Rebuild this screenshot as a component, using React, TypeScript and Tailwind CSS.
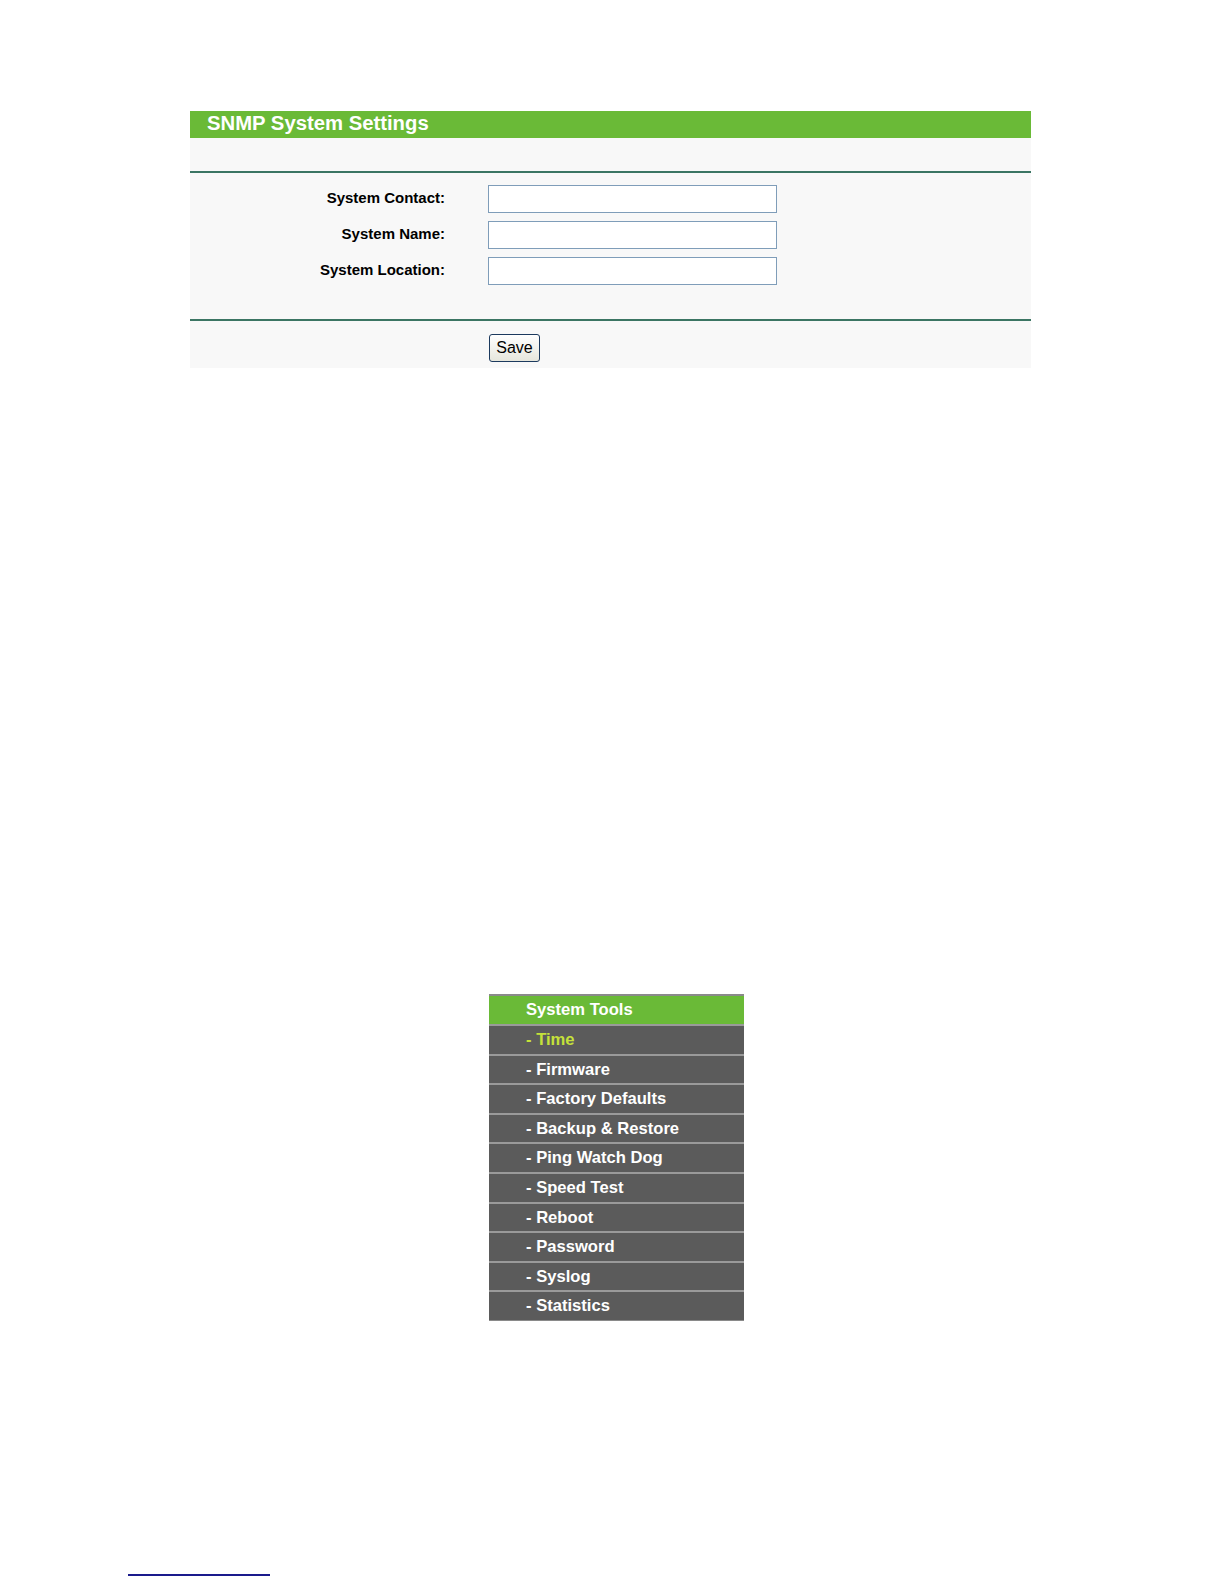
import React from 'react';

const fields = ['System Contact:', 'System Name:', 'System Location:'];

const menuItems = [
  'Time',
  'Firmware',
  'Factory Defaults',
  'Backup & Restore',
  'Ping Watch Dog',
  'Speed Test',
  'Reboot',
  'Password',
  'Syslog',
  'Statistics',
];

const SettingsPanel: React.FC = () => (
  <div className="ml-[190px] w-[841px] bg-[#f8f8f8]">
    <div className="h-[27px] bg-[#6aba37] pl-[17px] text-[20.3px] font-bold leading-[25px] text-white">
      SNMP System Settings
    </div>
    <div className="h-[33px]" />
    <div className="h-[2px] bg-[#3b7563]" />
    <div className="flex flex-col gap-[8px] pt-[12px] pb-[34px]">
      {fields.map((label) => (
        <div key={label} className="flex items-center">
          <div className="w-[255px] pb-[2px] text-right text-[15px] font-bold text-black">{label}</div>
          <input
            type="text"
            className="ml-[43px] h-[28px] w-[289px] border border-[#7f9db9] bg-white outline-none"
          />
        </div>
      ))}
    </div>
    <div className="h-[2px] bg-[#3b7563]" />
    <div className="h-[47px] pt-[13px] pl-[299px]">
      <button className="h-[28px] w-[51px] rounded-[3px] border border-[#1c3a5e] bg-gradient-to-b from-white to-[#e6e6dc] text-[16px] leading-none text-black">
        Save
      </button>
    </div>
  </div>
);

const SideMenu: React.FC = () => (
  <div className="ml-[489px] w-[255px]">
    <div className="h-[30px] border-t-2 border-[#8a8a8a] bg-[#6aba37] pl-[37px] text-[16.6px] font-bold leading-[28px] text-white">
      System Tools
    </div>
    {menuItems.map((item, i) => (
      <div
        key={item}
        className={
          'h-[29.6px] border-t-2 border-[#9a9a9a] bg-[#5b5b5b] pl-[37px] text-[16.6px] font-bold leading-[27px] ' +
          (i === 0 ? 'text-[#c5e13a]' : 'text-white')
        }
      >
        - {item}
      </div>
    ))}
    <div className="h-[1px] bg-[#8a8a8a]" />
  </div>
);

export default function App() {
  return (
    <div
      className="relative h-[1584px] w-[1224px] overflow-hidden bg-white pt-[111px]"
      style={{ fontFamily: '"Liberation Sans", Arial, sans-serif' }}
    >
      <SettingsPanel />
      <div className="h-[626px]" />
      <SideMenu />
      <div className="ml-[128px] mt-[253px] h-[2px] w-[142px] bg-[#1a1a8c]" />
    </div>
  );
}
